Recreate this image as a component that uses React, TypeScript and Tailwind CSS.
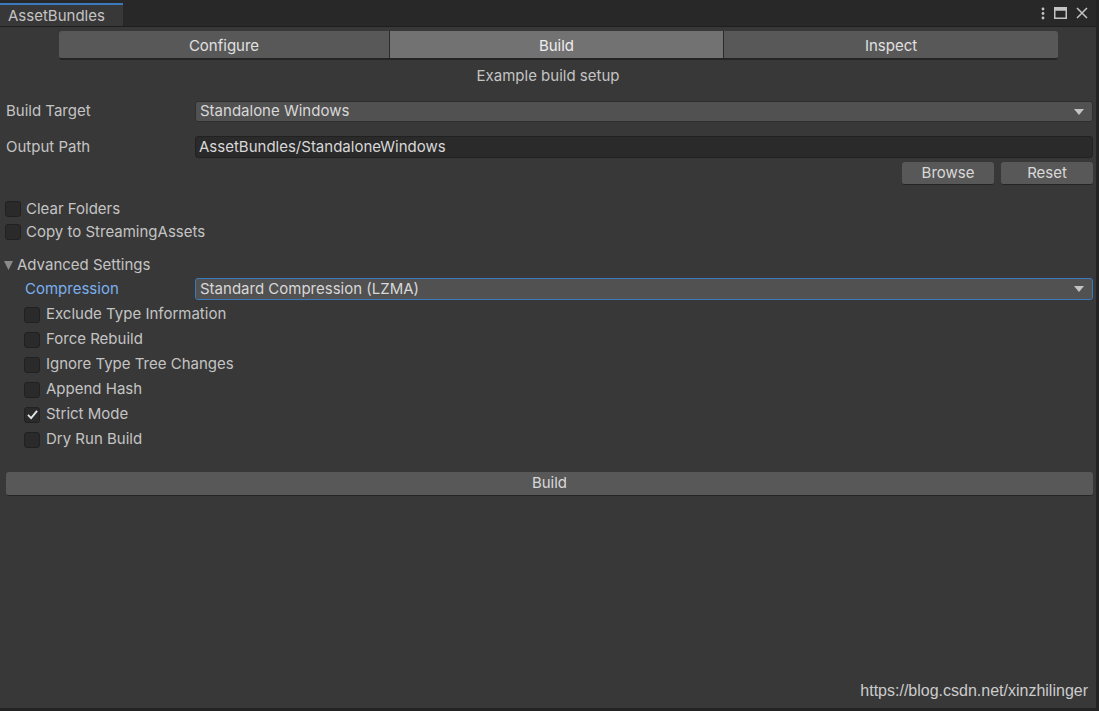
import { Fragment } from 'react';

const TABS = ['Configure', 'Build', 'Inspect'];
const ADVANCED: { label: string; on?: boolean }[] = [
  { label: 'Exclude Type Information' },
  { label: 'Force Rebuild' },
  { label: 'Ignore Type Tree Changes' },
  { label: 'Append Hash' },
  { label: 'Strict Mode', on: true },
  { label: 'Dry Run Build' },
];

function Check({ on }: { on?: boolean }) {
  return (
    <span className="w-[16px] h-[16px] rounded-[3px] bg-[#2a2a2a] border border-[#212121] flex items-center justify-center shrink-0">
      {on && (
        <svg width="13" height="13" viewBox="0 0 12 12">
          <path d="M1.8 6.4 L4.7 9.3 L10.2 2.6" fill="none" stroke="#e6e6e6" strokeWidth="1.7" />
        </svg>
      )}
    </span>
  );
}

function Caret() {
  return (
    <svg width="10" height="6" viewBox="0 0 10 6" className="shrink-0">
      <path d="M0 0 L10 0 L5 6 Z" fill="#c4c4c4" />
    </svg>
  );
}

export default function App() {
  return (
    <div className="w-[1099px] h-[711px] bg-[#383838] flex flex-col text-[15px] text-[#c4c4c4] font-['Inter',sans-serif] overflow-hidden relative border-r-[3px] border-b-[3px] border-[#232323]">
      {/* window tab strip */}
      <div className="h-[27px] bg-[#282828] border-b border-[#1e1e1e] flex items-end shrink-0">
        <div className="h-[23px] w-[123px] bg-[#383838] border-t-2 border-[#3a79bb] pl-[8px] pt-[1px] leading-[20px] text-[#c4c4c4]">AssetBundles</div>
        <div className="ml-auto self-center flex items-center gap-[9px] pr-[8px]">
          <svg width="4" height="13" viewBox="0 0 4 13">
            <circle cx="2" cy="2" r="1.4" fill="#c4c4c4" />
            <circle cx="2" cy="6.5" r="1.4" fill="#c4c4c4" />
            <circle cx="2" cy="11" r="1.4" fill="#c4c4c4" />
          </svg>
          <svg width="13" height="12" viewBox="0 0 13 12">
            <rect x="0.75" y="0.75" width="11.5" height="10.5" fill="none" stroke="#c4c4c4" strokeWidth="1.5" />
            <rect x="0.75" y="0.75" width="11.5" height="3" fill="#c4c4c4" />
          </svg>
          <svg width="12" height="12" viewBox="0 0 12 12">
            <path d="M1 1 L11 11 M11 1 L1 11" stroke="#c4c4c4" strokeWidth="1.5" />
          </svg>
        </div>
      </div>

      {/* toolbar */}
      <div className="flex ml-[59px] w-[999px] mt-[4px] h-[29px] shrink-0 rounded-[3px] overflow-hidden border-b-2 border-[#242424]">
        {TABS.map((t, i) => (
          <div
            key={t}
            className={`flex items-center justify-center pt-[3px] text-[#e0e0e0] ${
              i === 1 ? 'w-[335px] bg-[#727272] border-x border-[#2a2a2a] text-[#eeeeee]' : i === 0 ? 'w-[330px] bg-[#585858]' : 'flex-1 bg-[#585858]'
            }`}
          >
            {t}
          </div>
        ))}
      </div>

      <div className="text-center mt-[6px] h-[20px] leading-[20px] shrink-0">Example build setup</div>

      <div className="pl-[6px] pr-[3px] flex flex-col">
        {/* build target */}
        <div className="flex items-center mt-[15px] h-[21px]">
          <span className="w-[189px]">Build Target</span>
          <div className="flex-1 h-[21px] bg-[#515151] rounded-[3px] border border-[#2f2f2f] flex items-center pl-[4px] pr-[8px] text-[#d8d8d8]">
            <span className="flex-1">Standalone Windows</span>
            <Caret />
          </div>
        </div>
        {/* output path */}
        <div className="flex items-center mt-[14px] h-[22px]">
          <span className="w-[189px]">Output Path</span>
          <div className="flex-1 h-[22px] bg-[#2a2a2a] rounded-[3px] border border-[#212121] flex items-center pl-[3px] text-[#d8d8d8]">
            AssetBundles/StandaloneWindows
          </div>
        </div>
        <div className="flex justify-end gap-[7px] mt-[4px]">
          <div className="w-[92px] h-[23px] bg-[#585858] rounded-[3px] border-b border-[#242424] flex items-center justify-center text-[#d8d8d8]">Browse</div>
          <div className="w-[92px] h-[23px] bg-[#585858] rounded-[3px] border-b border-[#242424] flex items-center justify-center text-[#d8d8d8]">Reset</div>
        </div>

        <div className="flex flex-col gap-[7px] mt-[16px] -ml-[1px]">
          <label className="flex items-center gap-[5px] h-[16px]"><Check /><span>Clear Folders</span></label>
          <label className="flex items-center gap-[5px] h-[16px]"><Check /><span>Copy to StreamingAssets</span></label>
        </div>

        <div className="flex items-center gap-[4px] mt-[16px] h-[18px] -ml-[2px]">
          <svg width="9" height="9" viewBox="0 0 9 9"><path d="M0 0 L9 0 L4.5 9 Z" fill="#8a8a8a" /></svg>
          <span>Advanced Settings</span>
        </div>

        <div className="flex items-center mt-[4px] h-[22px]">
          <span className="w-[189px] pl-[19px] text-[#7bafef]">Compression</span>
          <div className="flex-1 h-[22px] bg-[#515151] rounded-[3px] border border-[#3a79bb] flex items-center pl-[4px] pr-[8px] text-[#d8d8d8]">
            <span className="flex-1">Standard Compression (LZMA)</span>
            <Caret />
          </div>
        </div>

        <div className="flex flex-col mt-[2px] pl-[18px]">
          {ADVANCED.map(a => (
            <Fragment key={a.label}>
              <label className="flex items-center gap-[6px] h-[25px]"><Check on={a.on} /><span>{a.label}</span></label>
            </Fragment>
          ))}
        </div>

        <div className="mt-[20px] h-[24px] bg-[#585858] rounded-[3px] border-b border-[#242424] flex items-center justify-center text-[#d8d8d8]">Build</div>
      </div>

      <div className="mt-auto self-end pr-[8px] pb-[5px] font-['Liberation_Sans',sans-serif] text-[16px] text-[#cccccc]">
        https://blog.csdn.net/xinzhilinger
      </div>
    </div>
  );
}
